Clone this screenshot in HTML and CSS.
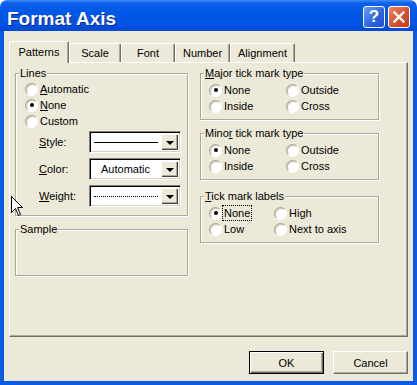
FILE: index.html
```html
<!DOCTYPE html>
<html lang="en">

<head>
    <meta charset="UTF-8">
    <title>Format Axis</title>
    <link rel="stylesheet" href="styles.css">
</head>

<body>
    <div class="window">
        <div class="titlebar">
            <span class="title">Format Axis</span>
            <div class="title-buttons">
                <span class="tb-btn help">?</span>
                <span class="tb-btn close">
                    <svg width="22" height="22" viewBox="0 0 22 22">
                        <path d="M6.5 6.5 L15.5 15.5 M15.5 6.5 L6.5 15.5" stroke="#fff" stroke-width="2.4" stroke-linecap="square" fill="none" />
                    </svg>
                </span>
            </div>
        </div>

        <div class="client">
            <div class="tabs">
                <div class="tab active" style="width: 60px">Patterns</div>
                <div class="tab" style="width: 52px">Scale</div>
                <div class="tab" style="width: 54px">Font</div>
                <div class="tab" style="width: 55px">Number</div>
                <div class="tab" style="width: 65px">Alignment</div>
            </div>

            <div class="panel">
                <div class="col-left">
                    <div class="group lines">
                        <span class="group-title">Lines</span>
                        <label class="radio-item"><span class="radio"></span><u>A</u>utomatic</label>
                        <label class="radio-item"><span class="radio checked"></span><u>N</u>one</label>
                        <label class="radio-item"><span class="radio"></span>Custom</label>

                        <div class="field-row first">
                            <span class="field-label"><u>S</u>tyle:</span>
                            <div class="combo">
                                <div class="combo-value"><span class="line-solid"></span></div>
                                <span class="combo-btn"><span class="arrow"></span></span>
                            </div>
                        </div>
                        <div class="field-row">
                            <span class="field-label"><u>C</u>olor:</span>
                            <div class="combo">
                                <div class="combo-value">Automatic</div>
                                <span class="combo-btn"><span class="arrow"></span></span>
                            </div>
                        </div>
                        <div class="field-row">
                            <span class="field-label"><u>W</u>eight:</span>
                            <div class="combo">
                                <div class="combo-value"><span class="line-dotted"></span></div>
                                <span class="combo-btn"><span class="arrow"></span></span>
                            </div>
                        </div>
                    </div>

                    <div class="group sample">
                        <span class="group-title">Sample</span>
                    </div>
                </div>

                <div class="col-right">
                    <div class="group">
                        <span class="group-title"><u>M</u>ajor tick mark type</span>
                        <div class="radio-grid">
                            <label class="radio-item"><span class="radio checked"></span>None</label>
                            <label class="radio-item"><span class="radio"></span>Outside</label>
                            <label class="radio-item"><span class="radio"></span>Inside</label>
                            <label class="radio-item"><span class="radio"></span>Cross</label>
                        </div>
                    </div>

                    <div class="group minor">
                        <span class="group-title">Mino<u>r</u> tick mark type</span>
                        <div class="radio-grid">
                            <label class="radio-item"><span class="radio checked"></span>None</label>
                            <label class="radio-item"><span class="radio"></span>Outside</label>
                            <label class="radio-item"><span class="radio"></span>Inside</label>
                            <label class="radio-item"><span class="radio"></span>Cross</label>
                        </div>
                    </div>

                    <div class="group labels">
                        <span class="group-title"><u>T</u>ick mark labels</span>
                        <div class="radio-grid narrow">
                            <label class="radio-item"><span class="radio checked"></span><span class="focus">None</span></label>
                            <label class="radio-item"><span class="radio"></span>High</label>
                            <label class="radio-item"><span class="radio"></span>Low</label>
                            <label class="radio-item"><span class="radio"></span>Next to axis</label>
                        </div>
                    </div>
                </div>
            </div>

            <div class="actions">
                <button class="btn default">OK</button>
                <button class="btn">Cancel</button>
            </div>
        </div>

        <!-- mouse pointer over the dialog -->
        <svg class="cursor" width="13" height="21" viewBox="0 0 13 21">
            <path d="M0.5 0.5 L0.5 16.5 L4.5 12.5 L7.5 19.5 L9.5 18.5 L6.5 11.5 L11.5 11.5 Z" fill="#fff" stroke="#000" stroke-width="1" />
        </svg>
    </div>
</body>

</html>
```

FILE: styles.css
```css
* {
    box-sizing: border-box;
}

body {
    margin: 0;
    background: #fff;
    font-family: "Liberation Sans", Arial, sans-serif;
    font-size: 11px;
    color: #000;
}

.window {
    position: relative;
    width: 417px;
    height: 385px;
    display: flex;
    flex-direction: column;
}

/* title bar */
.titlebar {
    height: 31px;
    flex: none;
    display: flex;
    align-items: flex-start;
    padding: 9px 0 0 7px;
    border-radius: 7px 7px 0 0;
    background: linear-gradient(#3d8ef5 0, #0c61ea 3px, #0058e6 12px, #0254e3 24px, #0047d4 31px);
}

.title {
    font-size: 19px;
    line-height: 19px;
    font-weight: bold;
    color: #fff;
    text-shadow: 1px 1px 0 #0a1f8c;
}

.title-buttons {
    display: flex;
    gap: 3px;
    margin: -3px 7px 0 auto;
}

.tb-btn {
    width: 22px;
    height: 22px;
    border: 1px solid #fff;
    border-radius: 3px;
    display: flex;
    align-items: center;
    justify-content: center;
}

.tb-btn.help {
    background: linear-gradient(135deg, #6f9cf7, #2b62e2 60%, #1f4fd0);
    color: #fff;
    font-size: 17px;
    font-weight: bold;
    line-height: 20px;
}

.tb-btn.close {
    background: linear-gradient(135deg, #ec8a66, #d9502a 55%, #c23f17);
}

.tb-btn.close svg {
    display: block;
    margin: -1px;
}

/* dialog body */
.client {
    flex: 1;
    background: #ece9d8;
    border: 4px solid #0a5ce6;
    border-top: 0;
    padding: 10px 5px 0 5px;
}

.tabs {
    display: flex;
    align-items: flex-end;
    height: 21px;
}

.tab {
    height: 19px;
    line-height: 18px;
    text-align: center;
    border-top: 1px solid #fff;
    border-left: 1px solid #fff;
    border-right: 1px solid #716f64;
    border-radius: 2px 2px 0 0;
    box-shadow: inset -1px 0 0 #aca899;
    background: #ece9d8;
}

.tab.active {
    height: 22px;
    line-height: 21px;
    margin-bottom: -1px;
    position: relative;
    z-index: 1;
}

.panel {
    height: 275px;
    display: flex;
    padding: 10px 0 0 5px;
    border-top: 1px solid #fff;
    border-left: 1px solid #fff;
    border-right: 1px solid #716f64;
    border-bottom: 1px solid #716f64;
    box-shadow: inset -1px -1px 0 #aca899;
}

.col-left {
    width: 173px;
}

.col-right {
    width: 179px;
    margin-left: 12px;
}

/* group boxes */
.group {
    position: relative;
    height: 47px;
    padding: 8px 0 0 8px;
    border: 1px solid #aca899;
    box-shadow: inset 1px 1px 0 #fff, 1px 1px 0 #fff;
}

.group + .group {
    margin-top: 13px;
}

.group.labels {
    margin-top: 16px;
}

.group-title {
    position: absolute;
    top: -7px;
    left: 3px;
    padding: 0 1px;
    line-height: 13px;
    background: #ece9d8;
    white-space: nowrap;
}

.group.lines {
    height: 143px;
    padding: 7px 0 0 9px;
}

u {
    text-underline-offset: 1px;
}

/* radio buttons */
.radio-item {
    display: flex;
    align-items: center;
    height: 16px;
    white-space: nowrap;
}

.radio {
    width: 13px;
    height: 13px;
    flex: none;
    margin-right: 2px;
    border-radius: 50%;
    border: 1px solid;
    border-color: #aca899 #fff #fff #aca899;
    background: #fff;
    box-shadow: inset 1px 1px 0 #c9c6b8;
    position: relative;
}

.radio.checked::after {
    content: "";
    position: absolute;
    left: 3.5px;
    top: 3.5px;
    width: 4px;
    height: 4px;
    border-radius: 50%;
    background: #000;
}

.radio-grid {
    display: grid;
    grid-template-columns: 77px auto;
}

.radio-grid.narrow {
    grid-template-columns: 65px auto;
}

.focus {
    outline: 1px dotted #000;
    outline-offset: 1px;
}

/* style / color / weight rows */
.field-row {
    display: flex;
    align-items: center;
    margin-top: 5px;
    padding-left: 14px;
}

.field-row.first {
    margin-top: 2px;
}

.field-label {
    width: 50px;
}

.combo {
    width: 92px;
    height: 22px;
    display: flex;
    padding: 2px;
    background: #fff;
    border: 1px solid;
    border-color: #808080 #fff #fff #808080;
    box-shadow: inset 1px 1px 0 #000, inset -1px -1px 0 #d4d0c8;
}

.combo-value {
    flex: 1;
    display: flex;
    align-items: center;
    justify-content: center;
    padding-right: 2px;
}

.line-solid {
    width: 64px;
    border-top: 1px solid #000;
}

.line-dotted {
    width: 64px;
    border-top: 1px dotted #000;
}

.combo-btn {
    width: 17px;
    height: 16px;
    display: flex;
    align-items: center;
    justify-content: center;
    background: #ece9d8;
    box-shadow: inset 1px 1px 0 #fff, inset -1px -1px 0 #404040, inset -2px -2px 0 #aca899;
}

.arrow {
    width: 0;
    height: 0;
    border-left: 4px solid transparent;
    border-right: 4px solid transparent;
    border-top: 4px solid #000;
    margin-top: 1px;
}

/* OK / Cancel */
.actions {
    display: flex;
    justify-content: flex-end;
    gap: 9px;
    margin-top: 14px;
}

.btn {
    width: 75px;
    height: 23px;
    font-family: "Liberation Sans", Arial, sans-serif;
    font-size: 11px;
    color: #000;
    background: #ece9d8;
    border: 1px solid;
    border-color: #fff #716f64 #716f64 #fff;
    box-shadow: inset -1px -1px 0 #aca899;
    padding: 0;
}

.btn.default {
    border: 1px solid #000;
    box-shadow: inset 1px 1px 0 #fff, inset -1px -1px 0 #716f64, inset -2px -2px 0 #aca899;
}

.cursor {
    position: absolute;
    left: 11px;
    top: 196px;
}
```
